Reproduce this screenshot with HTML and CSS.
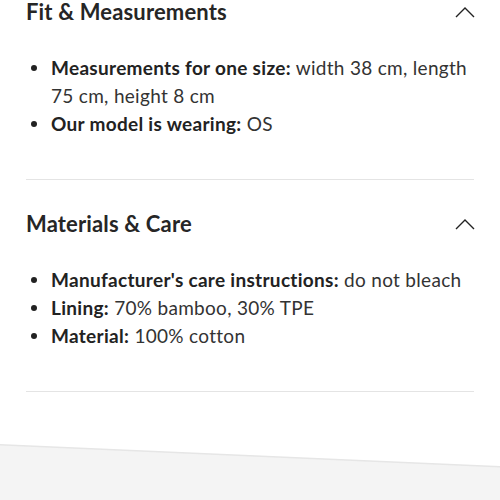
FILE: index.html
```html
<!DOCTYPE html>
<html>
<head>
<meta charset="utf-8">
<link rel="stylesheet" href="styles.css">
</head>
<body>
<main class="content">
  <section class="acc">
    <div class="acc-head">
      <h2 class="acc-title">Fit &amp; Measurements</h2>
      <svg class="chev" width="22" height="12" viewBox="0 0 22 12"><path d="M2 11 L11 2 L20 11" fill="none" stroke="#222" stroke-width="1.4"/></svg>
    </div>
    <ul class="acc-list">
      <li><b>Measurements for one size:</b> width 38 cm, length 75 cm, height 8 cm</li>
      <li><b>Our model is wearing:</b> OS</li>
    </ul>
  </section>
  <section class="acc">
    <div class="acc-head">
      <h2 class="acc-title">Materials &amp; Care</h2>
      <svg class="chev" width="22" height="12" viewBox="0 0 22 12"><path d="M2 11 L11 2 L20 11" fill="none" stroke="#222" stroke-width="1.4"/></svg>
    </div>
    <ul class="acc-list">
      <li><b>Manufacturer's care instructions:</b> do not bleach</li>
      <li><b>Lining:</b> 70% bamboo, 30% TPE</li>
      <li><b>Material:</b> 100% cotton</li>
    </ul>
  </section>
</main>
<footer class="foot"><div class="foot-inner"></div></footer>
</body>
</html>
```
FILE: styles.css
```css
html, body {
  margin: 0;
  padding: 0;
  background: #fff;
}
body {
  width: 500px;
  height: 500px;
  overflow: hidden;
  font-family: Lato, "Noto Sans", sans-serif;
  color: #222;
}
.content {
  padding: 0 26px;
}
.acc {
  border-bottom: 1.5px solid #e4e4e4;
  padding-bottom: 41px;
}
.acc + .acc {
  padding-top: 32px;
}
.acc-head {
  display: flex;
  justify-content: space-between;
  align-items: center;
  height: 24px;
}
.acc-title {
  margin: 0;
  font-size: 22px;
  font-weight: 700;
  line-height: 24px;
  letter-spacing: 0.15px;
  color: #262626;
}
.chev {
  display: block;
  margin-right: -2px;
}
.acc-list {
  margin: 30px 0 0;
  padding: 0 0 0 25px;
  list-style: none;
  font-size: 19px;
  line-height: 28px;
  letter-spacing: 0.3px;
  color: #333;
}
.acc-list li {
  position: relative;
}
.acc-list li::before {
  content: "";
  position: absolute;
  left: -20px;
  top: 11px;
  width: 6px;
  height: 6px;
  border-radius: 50%;
  background: #222;
}
.acc-list b {
  font-weight: 700;
  color: #222;
}
.foot {
  margin-top: 52px;
  height: 60px;
  background: #e6e6e6;
  clip-path: polygon(0 0, 100% 22px, 100% 100%, 0 100%);
}
.foot-inner {
  height: 100%;
  background: #f4f4f4;
  clip-path: polygon(0 1.5px, 100% 23.5px, 100% 100%, 0 100%);
}
```
